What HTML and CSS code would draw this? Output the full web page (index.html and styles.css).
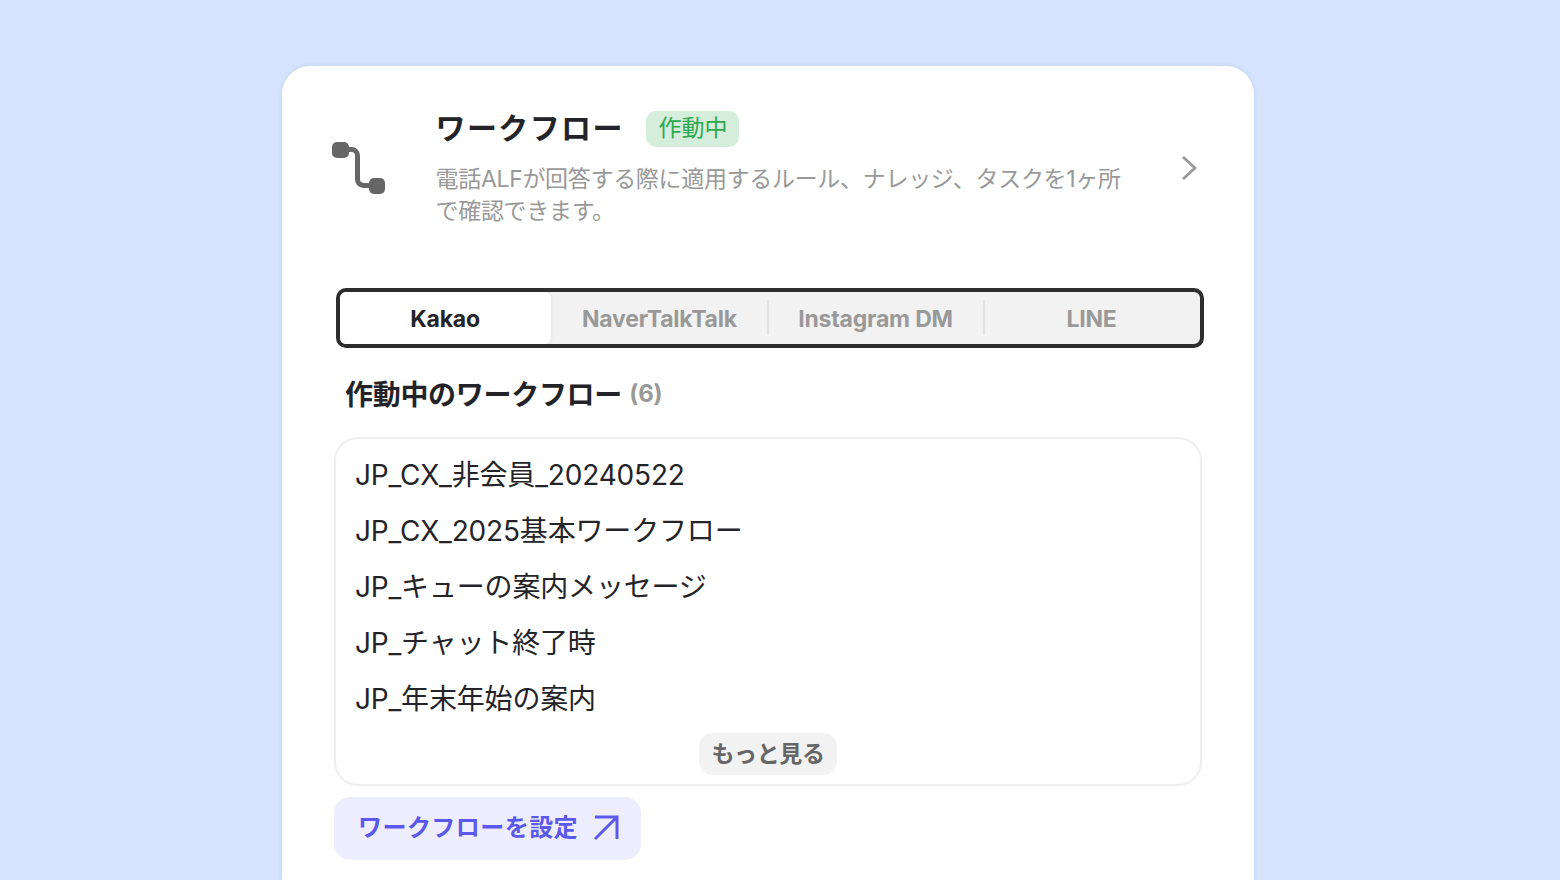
FILE: index.html
```html
<!DOCTYPE html>
<html lang="ja">
<head>
<meta charset="utf-8">
<title>ワークフロー</title>
<link rel="stylesheet" href="styles.css">
</head>
<body>
<main class="card">
  <header class="head">
    <svg class="flow-icon" width="53" height="53" viewBox="0 0 53 53" aria-hidden="true">
      <rect x="0" y="1" width="17" height="16" rx="5" fill="#666"/>
      <rect x="37" y="37" width="16" height="16" rx="5" fill="#666"/>
      <path d="M15 8.5h4.5a6 6 0 0 1 6 6V38a6 6 0 0 0 6 6.5H39" fill="none" stroke="#666" stroke-width="5"/>
    </svg>
    <div class="head-text">
      <div class="title-row">
        <h1 class="title">ワークフロー</h1>
        <span class="badge">作動中</span>
      </div>
      <p class="desc">電話ALFが回答する際に適用するルール、ナレッジ、タスクを1ヶ所で確認できます。</p>
    </div>
    <svg class="chevron" width="16" height="26" viewBox="0 0 16 26" aria-hidden="true">
      <path d="M2 2l12 11L2 24" fill="none" stroke="#999" stroke-width="2.8"/>
    </svg>
  </header>
  <nav class="tabs">
    <span class="tab active">Kakao</span>
    <span class="tab">NaverTalkTalk</span>
    <span class="tab">Instagram DM</span>
    <span class="tab">LINE</span>
  </nav>
  <h2 class="section">作動中のワークフロー <span class="count">(6)</span></h2>
  <section class="list-box">
    <ul class="list">
      <li>JP_CX_非会員_20240522</li>
      <li>JP_CX_2025基本ワークフロー</li>
      <li>JP_キューの案内メッセージ</li>
      <li>JP_チャット終了時</li>
      <li>JP_年末年始の案内</li>
    </ul>
    <button class="more">もっと見る</button>
  </section>
  <button class="setup">ワークフローを設定
    <svg width="26" height="26" viewBox="0 0 26 26" aria-hidden="true">
      <path d="M2 2h22v22M24 2L2 24" fill="none" stroke="#5b58ec" stroke-width="3"/>
    </svg>
  </button>
</main>
</body>
</html>
```
FILE: styles.css
```css
* { box-sizing: border-box; }
html, body { height: 880px; overflow: hidden; }
body {
  margin: 0;
  background: #d6e4ff;
  font-family: Inter, "Noto Sans CJK JP", sans-serif;
  color: #242428;
}
.card {
  width: 972px;
  height: 814px;
  margin: 66px 0 0 282px;
  padding: 45px 52px 0;
  background: #fff;
  border-radius: 28px 28px 0 0;
  box-shadow: 0 0 4px rgba(80, 110, 180, 0.18);
}
.head { display: flex; align-items: flex-start; margin-left: -2px; }
.flow-icon { flex: none; margin: 30px 50.5px 0 0; }
.head-text { width: 696px; }
.title-row { display: flex; align-items: flex-start; gap: 22.5px; height: 36px; }
.title { margin: 0; font-size: 30px; font-weight: 700; line-height: 34px; letter-spacing: 1.4px; }
.badge {
  height: 36px;
  padding: 0 12px;
  border-radius: 10px;
  background: #d5eedb;
  color: #2fa84f;
  font-size: 23px;
  line-height: 35px;
}
.desc { margin: 16px 0 0; font-size: 23px; line-height: 32px; color: #999; letter-spacing: -0.31px; width: 690px; }
.chevron { flex: none; margin: 44px 0 0 49.5px; }
.tabs {
  display: flex;
  height: 60px;
  margin: 61px -2px 0 2px;
  border: 4px solid #2e2e2e;
  border-radius: 10px;
  background: #f2f2f2;
}
.tab {
  position: relative;
  flex: 0 0 216px;
  padding-left: 1px;
  text-align: center;
  font-size: 23px;
  font-weight: 700;
  line-height: 54px;
  letter-spacing: -0.2px;
  color: #999;
}
.tab + .tab + .tab::before {
  content: "";
  position: absolute;
  left: 0;
  top: 8px;
  height: 35px;
  width: 2px;
  background: #e2e2e2;
}
.tab.active {
  flex-basis: 211px;
  padding: 0 1px 0 0;
  background: #fff;
  color: #242428;
  border-radius: 6px;
  box-shadow: 0 0 3px rgba(0, 0, 0, 0.12);
}
.section { margin: 27px 0 0 11px; font-size: 28px; font-weight: 700; line-height: 40px; letter-spacing: -0.3px; }
.count { position: relative; top: -3px; margin-left: 1px; font-size: 24px; font-weight: 700; color: #999; letter-spacing: -0.2px; }
.list-box {
  position: relative;
  height: 349px;
  margin: 20px 0 0;
  padding: 8px 19px;
  border: 2px solid #eee;
  border-radius: 24px;
}
.list { margin: 0; padding: 0; list-style: none; font-size: 28px; line-height: 56px; letter-spacing: -0.17px; }
.more {
  position: absolute;
  left: 363px;
  top: 294px;
  width: 138px;
  height: 42px;
  padding: 0;
  border: 0;
  border-radius: 14px;
  background: #f2f2f2;
  color: #666;
  font: 600 23px/42px Inter, "Noto Sans CJK JP", sans-serif;
  letter-spacing: -0.4px;
}
.setup {
  display: flex;
  align-items: center;
  gap: 15px;
  height: 63px;
  margin-top: 11px;
  padding: 0 22px 2px 24px;
  border: 0;
  border-radius: 16px;
  background: #eeedfe;
  color: #5b58ec;
  font: 600 24px/32px Inter, "Noto Sans CJK JP", sans-serif;
  letter-spacing: 0.45px;
}
```
